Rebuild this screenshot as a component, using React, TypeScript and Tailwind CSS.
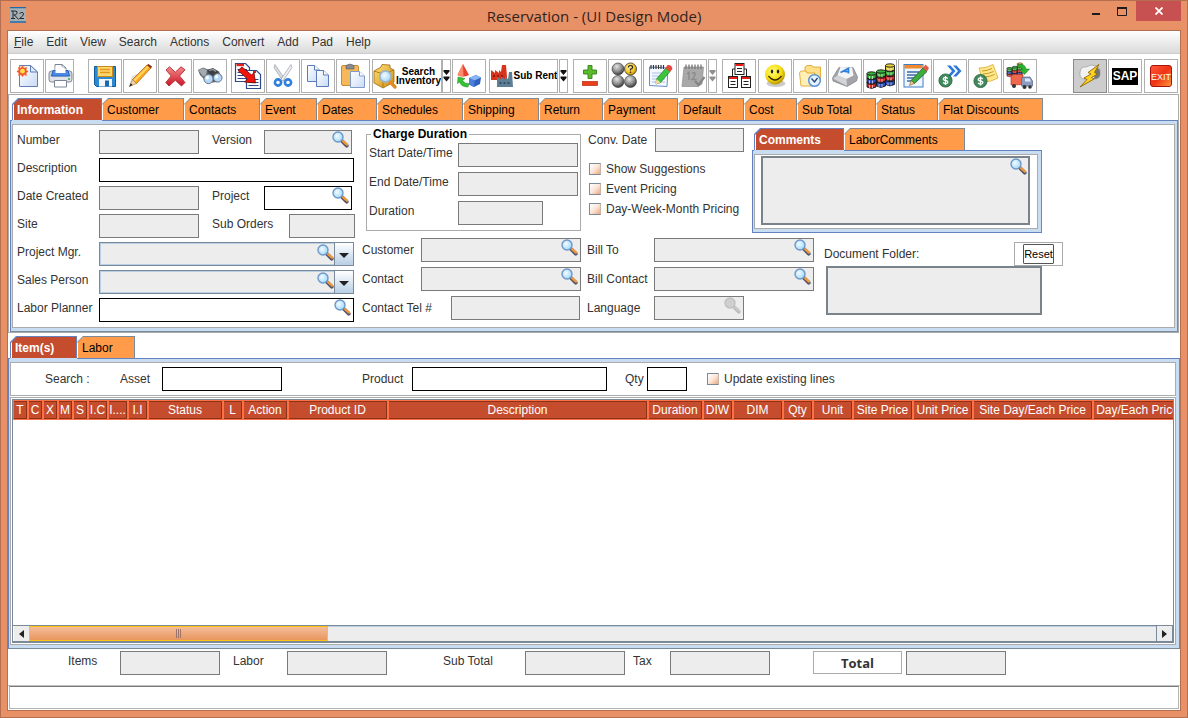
import React, { useId } from "react";
import type { ReactNode } from "react";

/* ---------- icons ---------- */

function Art({ children, w = "w-6" }: { children: ReactNode; w?: string }) {
  return (
    <svg viewBox="0 0 24 24" className={`h-6 shrink-0 overflow-visible ${w}`} aria-hidden="true">
      {children}
    </svg>
  );
}

function Gradients() {
  return (
    <svg className="absolute h-0 w-0" aria-hidden="true">
      <defs>
        <linearGradient id="gPaper" x1="0" y1="0" x2="1" y2="1">
          <stop offset="0" stopColor="#ffffff" />
          <stop offset="1" stopColor="#c9dbf5" />
        </linearGradient>
        <linearGradient id="gRed" x1="0" y1="0" x2="0" y2="1">
          <stop offset="0" stopColor="#f58a8a" />
          <stop offset="1" stopColor="#c81626" />
        </linearGradient>
        <linearGradient id="gGold" x1="0" y1="0" x2="1" y2="1">
          <stop offset="0" stopColor="#ffe17a" />
          <stop offset="1" stopColor="#d08a10" />
        </linearGradient>
        <linearGradient id="gExit" x1="0" y1="0" x2="1" y2="1">
          <stop offset="0" stopColor="#ff5a3c" />
          <stop offset="0.5" stopColor="#ee3414" />
          <stop offset="1" stopColor="#ff9a3c" />
        </linearGradient>
        <radialGradient id="gBall" cx="0.4" cy="0.3" r="0.7">
          <stop offset="0" stopColor="#e4e4e4" />
          <stop offset="0.6" stopColor="#8a8a8a" />
          <stop offset="1" stopColor="#3a3a3a" />
        </radialGradient>
        <radialGradient id="gSmile" cx="0.4" cy="0.35" r="0.7">
          <stop offset="0" stopColor="#ffff7a" />
          <stop offset="0.6" stopColor="#f7dc10" />
          <stop offset="1" stopColor="#b08a00" />
        </radialGradient>
        <radialGradient id="gAmber" cx="0.4" cy="0.35" r="0.7">
          <stop offset="0" stopColor="#fff2a8" />
          <stop offset="0.6" stopColor="#f8c428" />
          <stop offset="1" stopColor="#c08a00" />
        </radialGradient>
        <radialGradient id="gLens" cx="0.4" cy="0.4" r="0.6">
          <stop offset="0" stopColor="#f2fbff" />
          <stop offset="1" stopColor="#a3dafa" />
        </radialGradient>
      </defs>
    </svg>
  );
}

const Magnifier = ({ dim = false }: { dim?: boolean }) => (
  <svg viewBox="0 0 17 17" className="h-[17px] w-[17px]" aria-hidden="true">
    <path d="M9.500 9.500L14.700 14.700" stroke={dim ? "#bdbdbd" : "#55566a"} strokeWidth="3.800" strokeLinecap="round" />
    <path d="M11 10.200L15 13.700" stroke={dim ? "#c8c8c8" : "#f09a3c"} strokeWidth="2.200" strokeLinecap="round" />
    <circle cx="6" cy="6" r="5" fill={dim ? "#cfcfcf" : "url(#gLens)"} stroke={dim ? "#c0c0c0" : "#6f97c8"} strokeWidth="1.400" />
  </svg>
);

const NewDoc = () => (
  <Art>
    <path d="M4.500 1.500H15.500L22.500 8V22.500H4.500Z" fill="url(#gPaper)" stroke="#5f7fb5" />
    <path d="M15.500 1.500V8H22.500Z" fill="#dfeafc" stroke="#5f7fb5" />
    <circle cx="7.500" cy="7" r="5.200" fill="#ffb27a" opacity="0.600" />
    <path d="M7.500 1.500L9 4.200L12 3L11 6L13.500 7.500L11 9L12 12L9 10.500L7.500 13L6 10.500L3 12L4 9L1.500 7.500L4 6L3 3L6 4.200Z" fill="#f4552c" />
    <circle cx="7.500" cy="7.200" r="2.400" fill="#ffe34d" />
  </Art>
);

const Printer = () => (
  <Art>
    <path d="M7 11V0.500H14L18 4V11Z" fill="#fff" stroke="#7a8496" />
    <path d="M14 0.500V4H18" fill="none" stroke="#7a8496" />
    <rect x="1" y="7" width="23" height="11" rx="2.500" fill="#c9ced6" stroke="#858b97" />
    <path d="M5 6.500H20L21.500 12H3.500Z" fill="#4a8be8" stroke="#2a5fb8" />
    <path d="M7.500 2.500H13.500L17.500 5V9H7.500Z" fill="#fff" />
    <rect x="2" y="13" width="21" height="4" fill="#dfe2e8" />
    <circle cx="21" cy="15" r="1.100" fill="#2fae3c" />
    <path d="M6.500 16.500H18.500V23H6.500Z" fill="#fff" stroke="#7a8496" />
  </Art>
);

const Save = () => (
  <Art>
    <path d="M1.500 2.500H22.500V22.500H3.500L1.500 20.500Z" fill="#2e8ad0" stroke="#14599a" />
    <rect x="4.500" y="2.500" width="15" height="10" fill="#ffd66b" stroke="#c98a18" />
    <path d="M7 5.500H17M7 8.500H17" stroke="#e09a20" strokeWidth="1.400" />
    <rect x="6" y="15" width="13" height="7.500" fill="#f4f8fc" />
    <rect x="12" y="16.500" width="4" height="6" fill="#1a68b0" />
  </Art>
);

const Pencil = () => (
  <Art>
    <path d="M1 22L4 12L14 8Z" fill="#d4d4d4" opacity="0.700" />
    <path d="M4.500 15.500L19 1L23 4L8.500 19.500Z" fill="#ffa81e" stroke="#a0640c" strokeWidth="0.700" />
    <path d="M5.500 16L19.700 2L21 3L7 17.500Z" fill="#ffd86a" />
    <path d="M19 1L20.500 0L24 2.500L23 4.500Z" fill="#8a2a1c" />
    <path d="M4.500 15.500L8.500 19.500L1.500 22.500Z" fill="#f2d3a4" stroke="#8a6420" strokeWidth="0.500" />
    <path d="M2.800 19.200L4.600 21L1.200 22.800Z" fill="#222" />
  </Art>
);

const Delete = () => (
  <Art>
    <path
      d="M3 6L6.500 2.800L12.300 8.200L18 2.800L22 5.800L16.500 12L22 18.500L18.500 22L12.300 16.200L6 22L2.800 18.500L8.200 12Z"
      fill="url(#gRed)"
      stroke="#b02a34"
      strokeWidth="0.900"
      strokeLinejoin="round"
    />
  </Art>
);

const Binoculars = () => (
  <Art>
    <path d="M0 6L5 3.500L10 5.500L15 4L21 7.500L24 14L19 18L10 19L2 11Z" fill="#5c6066" />
    <path d="M0.500 6.500L5 4L9 6L8 12L5 12.500Z" fill="#a6abb2" />
    <path d="M9 6L15 4.500L20.500 8L17 12L12 11Z" fill="#3c3f44" />
    <path d="M11 6.500L15 5.500L18 7.500" stroke="#9a9fa6" strokeWidth="1.200" fill="none" />
    <circle cx="10.500" cy="15" r="4.600" fill="#b4d9fb" stroke="#6a727c" />
    <circle cx="19.700" cy="13.800" r="4.300" fill="#b4d9fb" stroke="#6a727c" />
    <circle cx="9.300" cy="13.800" r="1.700" fill="#fff" />
    <circle cx="18.600" cy="12.700" r="1.600" fill="#fff" />
  </Art>
);

const Replace = () => (
  <Art>
    <path d="M-0.500 -0.500H9.500L13.500 3.500V17.500H-0.500Z" fill="#fff" stroke="#2a4a8a" strokeWidth="1.200" />
    <path d="M0.500 1H8" stroke="#e8201a" strokeWidth="2.400" />
    <path d="M1.500 5.500H11M1.500 8.500H11M1.500 11.500H11M1.500 14.500H11" stroke="#2a4a8a" />
    <path d="M10.500 6.500H20.500L24.500 10.500V24.500H10.500Z" fill="#fff" stroke="#2a4a8a" strokeWidth="1.200" />
    <path d="M17 8H20" stroke="#e8201a" strokeWidth="2" />
    <path d="M12.500 15.500H22.500M12.500 18.500H22.500M12.500 21.500H22.500" stroke="#2a4a8a" />
    <path d="M2 6.500L6 3L15.500 11L18 8.500L19.500 19L8.500 18L11.500 15Z" fill="#f0140c" stroke="#6a0a06" strokeWidth="0.800" />
  </Art>
);

const Scissors = () => (
  <Art>
    <path d="M4 0.500L14.500 16L12 17L3 3.500Z" fill="#d8dce0" stroke="#9aa0a8" strokeWidth="0.700" />
    <path d="M20 0.500L9.500 16L12 17L21 3.500Z" fill="#eef0f2" stroke="#9aa0a8" strokeWidth="0.700" />
    <circle cx="7" cy="18.500" r="3.100" fill="none" stroke="#2f7fdc" strokeWidth="2.600" />
    <circle cx="17" cy="18.500" r="3.100" fill="none" stroke="#2f7fdc" strokeWidth="2.600" />
  </Art>
);

const Copy = () => (
  <Art>
    <path d="M1.500 1.500H8.500L13.500 6V17.500H1.500Z" fill="url(#gPaper)" stroke="#5b7cb8" />
    <path d="M8.500 1.500V6H13.500" fill="#fff" stroke="#5b7cb8" />
    <path d="M10.500 6.500H17.500L22.500 11V22.500H10.500Z" fill="url(#gPaper)" stroke="#5b7cb8" />
    <path d="M17.500 6.500V11H22.500" fill="#fff" stroke="#5b7cb8" />
  </Art>
);

const Paste = () => (
  <Art>
    <rect x="0.500" y="1.500" width="17" height="20" rx="1.500" fill="#f5b95c" stroke="#c98a30" />
    <path d="M5 1.500Q9 -1.500 13 1.500V5H5Z" fill="#8a8a92" stroke="#5a5a60" strokeWidth="0.600" />
    <path d="M9.500 7.500H18.500L23.500 12V23.500H9.500Z" fill="url(#gPaper)" stroke="#7f9cc8" />
    <path d="M18.500 7.500V12H23.500" fill="#fff" stroke="#7f9cc8" />
  </Art>
);

const InventoryBox = () => (
  <Art>
    <path d="M1 7L8 3L9 0.500L17 1L17 4L21 6V18L10 24L1 19Z" fill="url(#gGold)" stroke="#9a6a0c" strokeWidth="0.800" />
    <path d="M1 7L10 10L21 6M10 10V23" stroke="#b47c14" fill="none" />
    <path d="M16.500 17L22 23" stroke="#e08a20" strokeWidth="3.400" strokeLinecap="round" />
    <circle cx="12.500" cy="12.500" r="5.600" fill="url(#gLens)" stroke="#9db4c8" strokeWidth="1.700" />
  </Art>
);

const Shapes = () => (
  <Art>
    <path d="M6 0L12 11Q6 14 0.500 11Z" fill="#e8402c" />
    <path d="M6 0L6.500 12.500Q3 12.500 0.500 11Z" fill="#ff8a6a" />
    <path d="M1 13L8 14.500L5.500 16.500Q8 20 12 19.500L11 23Q4 23 2.500 18L0.500 19.500Z" fill="#38c038" stroke="#1c8a20" strokeWidth="0.500" />
    <path d="M12 14L19 11L24 13.500L23 20L17 23L12 20.500Z" fill="#2f5fc0" />
    <path d="M12 14L19 11L24 13.500L17.500 16.500Z" fill="#8ab4f4" />
    <path d="M12 14L17.500 16.500L17 23L12 20.500Z" fill="#4a7fdc" />
  </Art>
);

const Factory = () => (
  <Art>
    <path d="M1 16V6L5 9V6L9 9V6L11 8L12 1H16L17 13V16H1Z" fill="#d8341c" />
    <path d="M3 12H5M7 12H9M11 12H13" stroke="#7a140a" strokeWidth="1.600" />
    <path d="M7 23V12.500L11 15.500V12.500L15 15.500V12.500L18 15L19 8H22L23 23Z" fill="#5d7f95" />
    <path d="M9.500 19H11.500M13.500 19H15.500M17.500 19H19.500" stroke="#27404f" strokeWidth="1.600" />
  </Art>
);

const PlusMinus = () => (
  <Art>
    <path d="M10 1.500H14V6H18.500V10H14V14.500H10V10H5.500V6H10Z" fill="#5cb82c" stroke="#2f8414" strokeWidth="0.900" />
    <rect x="4.500" y="17.500" width="15" height="4" fill="#e8401c" stroke="#b8280c" strokeWidth="0.700" />
  </Art>
);

const Balls = () => (
  <Art>
    <circle cx="5" cy="5" r="6" fill="url(#gBall)" stroke="#333" strokeWidth="0.600" />
    <circle cx="17.500" cy="5" r="6" fill="url(#gAmber)" stroke="#333" strokeWidth="0.800" />
    <circle cx="5" cy="17.500" r="6" fill="url(#gBall)" stroke="#333" strokeWidth="0.600" />
    <circle cx="17.500" cy="17.500" r="6" fill="url(#gBall)" stroke="#333" strokeWidth="0.600" />
    <path d="M15.500 3.500Q15.500 1.500 17.500 1.500Q19.700 1.500 19.500 3.500Q19.400 4.800 17.500 5.200V6.500" fill="none" stroke="#222" strokeWidth="1.200" />
    <circle cx="17.500" cy="8.300" r="0.800" fill="#222" />
  </Art>
);

const NotePencil = () => (
  <Art>
    <path d="M1.500 3L20 4L19 22.500L1.500 21.500Z" fill="#f4f8ff" stroke="#6a8cc8" />
    <path d="M4 9H17M4 12H17M4 15H17M4 18H17" stroke="#a8c0e8" />
    <path d="M3 1V5M5.500 1V5M8 1V5M10.500 1V5M13 1V5M15.500 1V5" stroke="#333" strokeWidth="1.200" />
    <path d="M8.500 15L18 4L22 7.500L12.500 18.500L8 20Z" fill="#3cc43c" stroke="#1c7a20" strokeWidth="0.700" />
    <path d="M17.500 4L19.500 1Q23.800 0.500 24.500 4.800L22 8Z" fill="#e8483c" />
    <path d="M8.500 15L12.500 18.500L7.500 20.500Z" fill="#f4d8a8" />
  </Art>
);

const CalendarOff = () => (
  <Art>
    <path d="M3 3H22.500L21 20L17 22.500H1Z" fill="#a9a9a9" stroke="#8f8f8f" strokeWidth="0.700" />
    <path d="M5 0.500V5M8 0.500V5M11 0.500V5M14 0.500V5M17 0.500V5M20 0.500V5" stroke="#787878" strokeWidth="1.300" />
    <path d="M6 10L8 8.500V16M11 9.500Q14.500 7.500 14 10.500Q13.500 13 11 15.500H15.500" stroke="#8c8c8c" strokeWidth="1.500" fill="none" />
    <path d="M14 17L17.500 21L23.500 13" stroke="#858585" strokeWidth="2.200" fill="none" />
  </Art>
);

const OrgDocs = () => (
  <Art>
    <path d="M8 5H5.500V12.500M17 5H19.500V12.500" stroke="#222" fill="none" />
    {[
      [8, -0.500],
      [1.500, 12.500],
      [14.500, 12.500],
    ].map(([x, y]) => (
      <g key={`${x}-${y}`}>
        <rect x={x} y={y} width="9" height="11" fill="#fff" stroke="#222" />
        <path d={`M${x + 0.500} ${y + 1.500}h8`} stroke="#e81c14" strokeWidth="2" />
        <path d={`M${x + 2} ${y + 5}h5M${x + 2} ${y + 8}h5`} stroke="#222" />
      </g>
    ))}
  </Art>
);

const Smile = () => (
  <Art>
    <ellipse cx="13" cy="19.500" rx="9.500" ry="3.500" fill="#a8a8a8" opacity="0.600" />
    <circle cx="12" cy="10.500" r="10" fill="url(#gSmile)" />
    <ellipse cx="9" cy="7.500" rx="1.200" ry="2" fill="#222" />
    <ellipse cx="15" cy="7.500" rx="1.200" ry="2" fill="#222" />
    <path d="M5.500 12Q12 20 18.500 12" stroke="#3a2c00" strokeWidth="1.400" fill="none" />
  </Art>
);

const FolderClock = () => (
  <Art>
    <path d="M7 3L9 1.500H14L15 3H22.500V18H7Z" fill="#ffe08a" stroke="#d8a020" strokeWidth="0.800" />
    <path d="M1.500 9L3 7H8L9 9H17V22H3Z" fill="#fff0b8" stroke="#d8a020" strokeWidth="0.800" />
    <circle cx="16.500" cy="16.500" r="5.800" fill="#e6f3ff" stroke="#5c94d8" strokeWidth="1.500" />
    <path d="M13.500 14.500L16.500 18L19.500 14" stroke="#24427a" strokeWidth="1.300" fill="none" />
  </Art>
);

const Key = () => (
  <Art>
    <path d="M-0.500 14L6 3.500L20 3.500L24.500 13L23.500 17L14 22.500L0 17Z" fill="#a2a4a8" stroke="#7c7e82" strokeWidth="0.700" />
    <path d="M4.500 11.500L7.500 3L19 3.500L20.500 11.500L13.500 15Z" fill="#f4f5f7" />
    <path d="M0 14.500L4.500 11.500L13.500 15L14 22Z" fill="#d2d4d8" />
    <path d="M7.500 8.500L15.500 4.500L15.500 9.500M10.500 7.200L15.500 7.800" stroke="#2f7fe0" strokeWidth="1.700" fill="none" />
  </Art>
);

function Drum({ x, y, c }: { x: number; y: number; c: string }) {
  return (
    <g stroke="#141414" strokeWidth="0.900">
      <path d={`M${x} ${y}v4.500q4.500 2.800 9 0v-4.500z`} fill={c} />
      <ellipse cx={x + 4.500} cy={y} rx="4.500" ry="1.700" fill={c} />
      <path d={`M${x + 2.500} ${y + 2.500}v3M${x + 5.500} ${y + 2.500}v3`} stroke="#fff" strokeWidth="0.900" opacity="0.700" />
    </g>
  );
}

function DrumStack() {
  return (
    <>
      <Drum x={17.500} y={16} c="#2c4ec0" />
      <Drum x={17.500} y={11} c="#d82c2c" />
      <Drum x={17.500} y={6} c="#3cb43c" />
      <Drum x={17.500} y={1.500} c="#e8d440" />
      <Drum x={8.500} y={17.500} c="#2c4ec0" />
      <Drum x={8.500} y={12.500} c="#d82c2c" />
      <Drum x={8.500} y={7.500} c="#3cb43c" />
      <Drum x={-1} y={18.500} c="#d82c2c" />
      <Drum x={-1} y={14} c="#2c4ec0" />
      <Drum x={-1} y={9.500} c="#3cb43c" />
    </>
  );
}

const Drums = () => (
  <Art>
    <DrumStack />
  </Art>
);

const EditDoc = () => (
  <Art>
    <rect x="1" y="0.500" width="19" height="22.500" fill="#eef5ff" stroke="#3f7cc4" />
    <rect x="1.500" y="1" width="18" height="3.500" fill="#f08a30" />
    <path d="M4 8H16M4 11H13M4 14H11M4 17H9" stroke="#3f6ca8" strokeWidth="1.300" />
    <path d="M8 16.500L20 4L24 7.500L11.500 19.500Z" fill="#3cac3c" stroke="#1c5a20" strokeWidth="0.800" />
    <path d="M20 4L22.500 0.500L26 4L24 7.500Z" fill="#e85848" />
    <path d="M8 16.500L11.500 19.500L6.500 21.500Z" fill="#f0c890" stroke="#6a4a14" strokeWidth="0.500" />
  </Art>
);

const Coin = ({ x, y }: { x: number; y: number }) => (
  <g>
    <circle cx={x} cy={y} r="6.600" fill="#3f8a5c" stroke="#28603e" strokeWidth="0.800" />
    <path
      d={`M${x + 2.300} ${y - 2}q-2.300 -2 -4.200 -0.500q-1.200 2 1.900 2.500q3.200 0.700 2 2.500q-2 1.500 -4.500 -0.500M${x} ${y - 4.500}v9`}
      stroke="#fff"
      strokeWidth="1.300"
      fill="none"
    />
  </g>
);

const CoinForward = () => (
  <Art>
    <path d="M9 1.500H12.500L17.500 7L12.500 12.500H9L14 7Z" fill="#2f78d8" />
    <path d="M15 1.500H18.500L23.500 7L18.500 12.500H15L20 7Z" fill="#2f78d8" />
    <Coin x={7.500} y={16.500} />
  </Art>
);

const CoinNote = () => (
  <Art>
    <path d="M6 4Q13 4.500 20 0.500L25 14Q18 18.500 10 17.500Z" fill="#ffe88a" stroke="#d8ac30" strokeWidth="0.800" />
    <path d="M9 7Q14 7 19 4.500M10 10Q15 10 20.500 7.500M11 13Q16 13 21.500 10.500" stroke="#c8982c" fill="none" />
    <Coin x={7.500} y={17} />
  </Art>
);

const Truck = () => (
  <Art>
    <g transform="translate(-0.500 -1) scale(0.560)">
      <DrumStack />
    </g>
    <path d="M10 1Q17 -1 18 5H21.500L16.500 10.500L11 5.500H14.500Q14 2.500 10 3.500Z" fill="#2cb42c" stroke="#187a1c" strokeWidth="0.500" />
    <path d="M3 12.500L5 10.500H15V20.500L3 21Z" fill="#f0684c" stroke="#b8341c" strokeWidth="0.700" />
    <path d="M13.500 14L16 13H22L24.500 17V22H13.500Z" fill="#8c9cc0" stroke="#52608a" strokeWidth="0.700" />
    <path d="M17 14.500H21.500L23 17.500H17Z" fill="#dce8f8" />
    <circle cx="6" cy="22" r="2" fill="#333" />
    <circle cx="16.500" cy="23" r="2" fill="#333" />
    <circle cx="22" cy="23" r="1.800" fill="#333" />
  </Art>
);

const Lightning = () => (
  <Art>
    <path d="M2 8Q3 2 8 3Q13 -0.500 18 2Q23 4 22 10Q22 15 16 15H6Q1 14 2 8Z" fill="#f2f2f2" stroke="#9a9a9a" strokeWidth="0.700" />
    <path d="M17 3Q23 4 22 10Q22 15 16 15Z" fill="#777" />
    <path d="M21 0.500L10 8.500L13 10L6 14L9 15.500L2 23L16 15L13.500 13.500L19.500 10L16.500 8.500Z" fill="#ffd21c" stroke="#8c6808" strokeWidth="0.900" />
  </Art>
);

/* ---------- controls ---------- */

function Tool({ label, w = "w-[34px]", m = "", bg = "bg-white", edge = "border-[#b0b0b0]", children }: {
  label: string; w?: string; m?: string; bg?: string; edge?: string; children: ReactNode;
}) {
  return (
    <button type="button" aria-label={label} className={`flex h-[34px] shrink-0 items-center justify-center overflow-hidden border ${edge} ${bg} ${w} ${m}`}>
      {children}
    </button>
  );
}

function DropTool({ label, w = "w-[9px]", m = "", fill = "#111" }: { label: string; w?: string; m?: string; fill?: string }) {
  return (
    <Tool label={label} w={w} m={m}>
      <svg viewBox="0 0 7 12" className="h-3 w-[7px] shrink-0" aria-hidden="true">
        <path d="M0.500 0H6.500V1.500L3.500 5L0.500 1.500ZM0.500 6.500H6.500V8L3.500 11.500L0.500 8Z" fill={fill} />
      </svg>
    </Tool>
  );
}

const fieldTone = {
  locked: "border-[#7a7a7a] bg-[#ededed]",
  open: "border-black bg-white",
};

function Field({ label, labelW = "", w, tone = "locked", lens, m = "", align = "items-start" }: {
  label: string; labelW?: string; w: string; tone?: "locked" | "open"; lens?: "on" | "off"; m?: string; align?: string;
}) {
  const id = useId();
  return (
    <div className={`flex shrink-0 ${align} ${m}`}>
      <label htmlFor={id} className={`shrink-0 leading-5 whitespace-nowrap ${labelW}`}>{label}</label>
      <div className={`relative shrink-0 ${w}`}>
        <input id={id} readOnly={tone === "locked"} className={`block h-6 w-full border px-1 outline-none ${fieldTone[tone]}`} />
        {lens && (
          <button type="button" disabled={lens === "off"} aria-label={`Find ${label}`} className="absolute top-px right-[3px]">
            <Magnifier dim={lens === "off"} />
          </button>
        )}
      </div>
    </div>
  );
}

function Combo({ label }: { label: string }) {
  const id = useId();
  return (
    <div className="flex items-start">
      <label htmlFor={id} className="w-[82px] shrink-0 leading-5 whitespace-nowrap">{label}</label>
      <div className="relative w-[255px]">
        <select id={id} className="block h-6 w-full appearance-none border border-[#7a8a99] bg-[#ededed] shadow-[inset_1px_1px_0_#b8cfe5,inset_0_-1px_0_#b8cfe5] outline-none">
          <option />
        </select>
        <div className="pointer-events-none absolute top-0 right-0 flex h-6 w-5 items-center justify-center border border-[#7a8a99] bg-linear-to-b from-white to-[#b8cfe5] pt-[2px]">
          <svg viewBox="0 0 10 5" className="h-[5px] w-[10px]" aria-hidden="true"><path d="M0 0H10L5 5Z" fill="#222" /></svg>
        </div>
        <button type="button" aria-label={`Find ${label}`} className="absolute top-[2px] right-5"><Magnifier /></button>
      </div>
    </div>
  );
}

function Check({ label, m = "" }: { label: string; m?: string }) {
  return (
    <label className={`flex h-5 shrink-0 items-center gap-[5px] whitespace-nowrap ${m}`}>
      <input
        type="checkbox"
        className="h-3 w-3 appearance-none border border-t-[#7a8a99] border-r-[#c9b4a8] border-b-[#7a8a99] border-l-[#7a8a99] bg-linear-to-br from-white via-[#fae6da] to-[#eda878] checked:bg-[#c54d2d]"
      />
      {label}
    </label>
  );
}

function Tab({ label, w, active = false }: { label: string; w: string; active?: boolean }) {
  return (
    <button
      type="button"
      role="tab"
      aria-selected={active}
      className={`relative flex shrink-0 pt-px pr-px [clip-path:polygon(0_6px,6px_0,100%_0,100%_100%,0_100%)] ${w} ${
        active ? "z-10 -mb-px h-[23px] border-b border-[#c8ddf2] bg-[#6382bf] pl-px" : "h-[22px] bg-[#7a8a99]"
      }`}
    >
      <span
        className={`flex h-full w-full items-center border-l border-white text-left whitespace-nowrap [clip-path:polygon(0_6px,6px_0,100%_0,100%_100%,0_100%)] ${
          active ? "bg-[#c54d2d] pl-[3px] font-bold text-white" : "bg-[#ff9b49] pl-1 text-black"
        }`}
      >
        {label}
      </span>
    </button>
  );
}

/* ---------- data ---------- */

const menus = ["Edit", "View", "Search", "Actions", "Convert", "Add", "Pad", "Help"];

const mainTabs: [string, string][] = [
  ["Information", "w-[90px]"],
  ["Customer", "w-[82px]"],
  ["Contacts", "w-[76px]"],
  ["Event", "w-[57px]"],
  ["Dates", "w-[60px]"],
  ["Schedules", "w-[86px]"],
  ["Shipping", "w-[76px]"],
  ["Return", "w-[64px]"],
  ["Payment", "w-[75px]"],
  ["Default", "w-[66px]"],
  ["Cost", "w-[53px]"],
  ["Sub Total", "w-[79px]"],
  ["Status", "w-[62px]"],
  ["Flat Discounts", "w-[105px]"],
];

const columns: [string, string][] = [
  ["T", "w-[15px]"],
  ["C", "w-[15px]"],
  ["X", "w-[15px]"],
  ["M", "w-[15px]"],
  ["S", "w-[15px]"],
  ["I.C", "w-[20px]"],
  ["I....", "w-[20px]"],
  ["I.I", "w-[20px]"],
  ["Status", "w-[75px]"],
  ["L", "w-[20px]"],
  ["Action", "w-[45px]"],
  ["Product ID", "w-[100px]"],
  ["Description", "w-[260px]"],
  ["Duration", "w-[55px]"],
  ["DIW", "w-[30px]"],
  ["DIM", "w-[50px]"],
  ["Qty", "w-[30px]"],
  ["Unit", "w-[40px]"],
  ["Site Price", "w-[60px]"],
  ["Unit Price", "w-[60px]"],
  ["Site Day/Each Price", "w-[120px]"],
  ["Day/Each Price", "w-[90px]"],
];

/* ---------- sections ---------- */

function TitleBar() {
  return (
    <header className="relative flex h-[29px] shrink-0 items-start justify-between">
      <svg viewBox="0 0 16 16" className="mt-[6px] ml-[3px] h-4 w-4" aria-hidden="true">
        <rect width="16" height="16" fill="#a9b0b4" />
        <path d="M0 0.500H16M0 15H16" stroke="#2468a8" strokeWidth="1.600" />
        <path d="M1 4H5Q8 4 7 6.500Q6 8 3.500 8M3 4V11M1 11.500H5M4.500 8L8.500 12.500M9.500 6.500Q13 4 13.500 7Q13.500 9 9.500 11.500H14" stroke="#1c2a36" fill="none" />
      </svg>
      <h1 className="absolute inset-x-0 top-[5px] text-center font-['Open_Sans','Noto_Sans',sans-serif] text-[15px] leading-5 text-[#30231d]">Reservation - (UI Design Mode)</h1>
      <div className="relative flex">
        <button type="button" aria-label="Minimize" className="flex h-5 w-6 items-center justify-center">
          <svg viewBox="0 0 10 12" className="h-3 w-[10px]" aria-hidden="true"><path d="M1 9H9" stroke="#1c1c1c" strokeWidth="2" /></svg>
        </button>
        <button type="button" aria-label="Maximize" className="flex h-5 w-7 items-center justify-center">
          <svg viewBox="0 0 10 9" className="h-[9px] w-[10px]" aria-hidden="true"><path d="M0.500 1H9.500V8.500H0.500Z" fill="none" stroke="#1c1c1c" /><path d="M0 1H10" stroke="#1c1c1c" strokeWidth="2" /></svg>
        </button>
        <button type="button" aria-label="Close" className="flex h-5 w-[45px] items-center justify-center bg-[#c75050]">
          <svg viewBox="0 0 8 8" className="h-2 w-2" aria-hidden="true"><path d="M0.500 0.500L7.500 7.500M7.500 0.500L0.500 7.500" stroke="#fff" strokeWidth="1.800" /></svg>
        </button>
      </div>
    </header>
  );
}

function Toolbar() {
  return (
    <div role="toolbar" className="flex shrink-0 gap-px pt-[5px] pr-[2px] pb-px pl-[2px]">
      <Tool label="New"><NewDoc /></Tool>
      <Tool label="Print" w="w-[29px]"><Printer /></Tool>
      <Tool label="Save" m="ml-[13px]"><Save /></Tool>
      <Tool label="Edit"><Pencil /></Tool>
      <Tool label="Delete"><Delete /></Tool>
      <Tool label="Find"><Binoculars /></Tool>
      <Tool label="Replace" m="ml-[3px]"><Replace /></Tool>
      <Tool label="Cut"><Scissors /></Tool>
      <Tool label="Copy"><Copy /></Tool>
      <Tool label="Paste"><Paste /></Tool>
      <Tool label="Search Inventory" w="w-[70px]" m="ml-px">
        <InventoryBox />
        <span className="-ml-px text-center text-[10px] leading-[9px] font-bold text-black">Search<br />Inventory</span>
      </Tool>
      <DropTool label="Search Inventory options" m="-ml-px" />
      <Tool label="Shapes"><Shapes /></Tool>
      <Tool label="Sub Rent" w="w-[69px]" m="ml-[2px]">
        <Factory />
        <span className="text-[10px] leading-3 font-bold whitespace-nowrap text-black">Sub Rent</span>
      </Tool>
      <DropTool label="Sub Rent options" />
      <Tool label="Add or remove" m="ml-1"><PlusMinus /></Tool>
      <Tool label="Availability"><Balls /></Tool>
      <Tool label="Notes"><NotePencil /></Tool>
      <Tool label="Calendar" w="w-[29px]"><CalendarOff /></Tool>
      <DropTool label="Calendar options" fill="#909090" />
      <Tool label="Documents" m="ml-1"><OrgDocs /></Tool>
      <Tool label="Status" m="ml-px"><Smile /></Tool>
      <Tool label="History"><FolderClock /></Tool>
      <Tool label="Keyboard"><Key /></Tool>
      <Tool label="Stock"><Drums /></Tool>
      <Tool label="Edit document"><EditDoc /></Tool>
      <Tool label="Forward payment"><CoinForward /></Tool>
      <Tool label="Invoice"><CoinNote /></Tool>
      <Tool label="Delivery"><Truck /></Tool>
      <Tool label="Quick action" m="ml-auto" bg="bg-[#cdcdcd]" edge="border-[#8a8a8a]"><Lightning /></Tool>
      <Tool label="SAP"><span className="bg-black px-px text-[12px] leading-[17px] font-bold text-white">SAP</span></Tool>
      <Tool label="Exit" m="ml-px">
        <svg viewBox="0 0 24 24" className="h-6 w-6 shrink-0" aria-hidden="true">
          <rect x="1.500" y="1.500" width="21" height="21" rx="2.500" fill="url(#gExit)" stroke="#a8140c" />
          <text x="12" y="15.500" textAnchor="middle" fill="#fff" fontSize="9" fontFamily="Liberation Sans, sans-serif">EXIT</text>
        </svg>
      </Tool>
    </div>
  );
}

function InfoPanel() {
  return (
    <div className="flex border border-[#ababab] bg-white pb-[5px] pl-1">
      <div className="flex w-[338px] shrink-0 flex-col gap-1 pt-[5px]">
        <div className="flex">
          <Field label="Number" labelW="w-[82px]" w="w-[100px]" />
          <Field label="Version" labelW="w-[52px]" w="w-[88px]" lens="on" m="ml-[13px]" />
        </div>
        <Field label="Description" labelW="w-[82px]" w="w-[255px]" tone="open" />
        <div className="flex">
          <Field label="Date Created" labelW="w-[82px]" w="w-[100px]" />
          <Field label="Project" labelW="w-[52px]" w="w-[88px]" tone="open" lens="on" m="ml-[13px]" />
        </div>
        <div className="flex">
          <Field label="Site" labelW="w-[82px]" w="w-[100px]" />
          <Field label="Sub Orders" labelW="w-[77px]" w="w-[66px]" m="ml-[13px]" />
        </div>
        <Combo label="Project Mgr." />
        <Combo label="Sales Person" />
        <Field label="Labor Planner" labelW="w-[82px]" w="w-[255px]" tone="open" lens="on" />
      </div>

      <div className="ml-[7px] w-[219px] shrink-0 pt-px">
        <fieldset className="ml-1 border border-[#ababab] pt-px pb-[5px] pl-[2px]">
          <legend className="ml-[2px] px-[2px] leading-4 font-bold text-black">Charge Duration</legend>
          <div className="flex flex-col gap-[5px]">
            <Field label="Start Date/Time" labelW="w-[89px]" w="w-[120px]" />
            <Field label="End Date/Time" labelW="w-[89px]" w="w-[120px]" />
            <Field label="Duration" labelW="w-[89px]" w="w-[85px]" />
          </div>
        </fieldset>
        <div className="mt-[7px] flex flex-col gap-[5px]">
          <Field label="Customer" labelW="w-[59px]" w="w-[160px]" lens="on" align="items-center" />
          <Field label="Contact" labelW="w-[59px]" w="w-[160px]" lens="on" align="items-center" />
          <Field label="Contact Tel #" labelW="w-[89px]" w="w-[129px]" align="items-center" />
        </div>
      </div>

      <div className="ml-[5px] min-w-0 flex-1 pt-[3px]">
        <div className="flex">
          <div className="w-[166px] shrink-0 pl-[2px]">
            <Field label="Conv. Date" labelW="w-[67px]" w="w-[89px]" align="items-center" />
            <div className="mt-[7px] ml-px">
              <Check label="Show Suggestions" />
              <Check label="Event Pricing" />
              <Check label="Day-Week-Month Pricing" />
            </div>
          </div>
          <div className="w-[290px]">
            <div role="tablist" className="flex pl-[2px]">
              <Tab label="Comments" w="w-[90px]" active />
              <Tab label="LaborComments" w="w-[121px]" />
            </div>
            <div className="border border-[#6382bf] border-r-[#7a8a99] bg-[#c8ddf2] pt-[3px] pr-[3px] pb-[3px] pl-px">
              <div className="border border-[#ababab] bg-white pt-px pr-[7px] pb-[3px] pl-[6px]">
                <div className="relative">
                  <textarea aria-label="Comments" readOnly className="block h-[69px] w-full resize-none border-2 border-[#7a828a] bg-[#ededed] outline-none" />
                  <button type="button" aria-label="Find comment" className="absolute top-[2px] right-[3px]"><Magnifier /></button>
                </div>
              </div>
            </div>
          </div>
        </div>
        <div className="mt-[5px] flex">
          <div className="flex w-[228px] shrink-0 flex-col gap-[5px] pl-px">
            <Field label="Bill To" labelW="w-[67px]" w="w-[160px]" lens="on" align="items-center" />
            <Field label="Bill Contact" labelW="w-[67px]" w="w-[160px]" lens="on" align="items-center" />
            <Field label="Language" labelW="w-[67px]" w="w-[90px]" lens="off" align="items-center" />
          </div>
          <div className="ml-[10px] w-[239px] pt-1">
            <div className="flex items-center justify-between">
              <label htmlFor="doc-folder">Document Folder:</label>
              <div className="flex h-6 w-[49px] items-center justify-center border border-[#ababab]">
                <button type="button" className="h-5 rounded-[1px] border border-[#555] text-[11px] leading-[18px] whitespace-nowrap text-black">Reset</button>
              </div>
            </div>
            <textarea id="doc-folder" readOnly className="ml-[2px] block h-[49px] w-[216px] resize-none border-2 border-[#7a828a] bg-[#ededed] outline-none" />
          </div>
        </div>
      </div>
    </div>
  );
}

function ItemsPanel() {
  return (
    <section className="flex flex-1 flex-col pt-[3px]">
      <div role="tablist" className="flex pl-[2px]">
        <Tab label="Item(s)" w="w-[67px]" active />
        <Tab label="Labor" w="w-[58px]" />
      </div>
      <div className="flex flex-1 flex-col border border-t-[#6382bf] border-r-[#7a8a99] border-b-[#7a8a99] border-l-[#6382bf] bg-[#c8ddf2] pt-[3px] pr-[3px] pb-[3px] pl-px">
        <div className="flex flex-1 flex-col gap-px bg-white">
          <div className="flex border border-[#ababab] py-1 pl-[34px]">
            <span className="w-[75px] leading-6">Search :</span>
            <Field label="Asset" labelW="w-[42px]" w="w-[120px]" tone="open" align="items-center" />
            <Field label="Product" labelW="w-[50px]" w="w-[195px]" tone="open" m="ml-20" align="items-center" />
            <Field label="Qty" labelW="w-[22px]" w="w-[40px]" tone="open" m="ml-[18px]" align="items-center" />
            <Check label="Update existing lines" m="ml-5 mt-[2px]" />
          </div>
          <div className="flex flex-1 border border-[#ababab] p-px">
            <div className="flex min-w-0 flex-1 flex-col border border-[#7a8a99]">
              <div className="w-0 min-w-full flex-1 overflow-hidden">
                <table className="w-[1170px] table-fixed border-collapse">
                  <thead>
                    <tr>
                      {columns.map(([name, w]) => (
                        <th key={name} scope="col" className={`h-5 p-0 font-normal ${w}`}>
                          <div className="h-5 border border-[#ff7044] bg-[#8c3218] p-px pl-0">
                            <div className="flex h-4 justify-center overflow-hidden bg-[#c54d2d] leading-4 whitespace-nowrap text-white">{name}</div>
                          </div>
                        </th>
                      ))}
                    </tr>
                  </thead>
                  <tbody />
                </table>
              </div>
              <div className="flex h-[17px] shrink-0 border-y border-[#7a8a99] bg-[#ededed]">
                <button type="button" aria-label="Scroll left" className="flex w-4 items-center justify-center border-l border-white">
                  <svg viewBox="0 0 5 8" className="h-2 w-[5px]" aria-hidden="true"><path d="M5 0V8L0 4Z" fill="#222" /></svg>
                </button>
                <div className="flex flex-1 shadow-[inset_0_1px_0_#b8cfe5]">
                  <div className="flex w-[299px] items-center justify-center gap-px border border-[#ffc20e] bg-linear-to-b from-[#f3bd98] to-[#e8965e]">
                    <i className="h-[9px] w-px bg-[#a07468]" />
                    <i className="h-[9px] w-px bg-[#a07468]" />
                    <i className="h-[9px] w-px bg-[#a07468]" />
                  </div>
                </div>
                <button type="button" aria-label="Scroll right" className="flex w-[17px] items-center justify-center border-x border-[#7a8a99]">
                  <svg viewBox="0 0 5 8" className="h-2 w-[5px]" aria-hidden="true"><path d="M0 0V8L5 4Z" fill="#222" /></svg>
                </button>
              </div>
            </div>
          </div>
        </div>
      </div>
    </section>
  );
}

export default function App() {
  return (
    <div className="flex min-h-screen flex-col border border-[#b46e50] bg-[#e89066] px-[6px] pb-[6px] font-['Liberation_Sans',Arial,sans-serif] text-[12px] text-[#333]">
      <Gradients />
      <TitleBar />
      <main className="flex flex-1 flex-col border border-[#b46e50] bg-white">
        <nav className="flex h-[23px] shrink-0 items-center gap-[13px] border-b border-[#cccccc] bg-linear-to-b from-white to-[#dadada] pl-[6px]">
          <button type="button"><u>F</u>ile</button>
          {menus.map((m) => (
            <button type="button" key={m}>{m}</button>
          ))}
        </nav>
        <Toolbar />
        <section className="mr-px border border-[#ababab] pt-[3px] pl-px">
          <div role="tablist" className="flex pl-[2px]">
            {mainTabs.map(([name, w], i) => (
              <Tab key={name} label={name} w={w} active={i === 0} />
            ))}
          </div>
          <div className="border border-t-[#6382bf] border-r-[#7a8a99] border-b-[#7a8a99] border-l-[#6382bf] bg-[#c8ddf2] pt-[3px] pr-[2px] pb-[3px] pl-px">
            <InfoPanel />
          </div>
        </section>
        <ItemsPanel />
        <footer>
          <div className="flex pt-[2px] pb-[10px] pl-[60px]">
            <Field label="Items" labelW="w-[52px]" w="w-[100px]" />
            <Field label="Labor" labelW="w-[54px]" w="w-[100px]" m="ml-[13px]" />
            <Field label="Sub Total" labelW="w-[82px]" w="w-[100px]" m="ml-14" />
            <Field label="Tax" labelW="w-[37px]" w="w-[100px]" m="ml-2" />
            <label htmlFor="grand-total" className="ml-[43px] flex h-[23px] w-[89px] items-center justify-center border border-[#ababab] pt-[2px] font-['Open_Sans','Noto_Sans',sans-serif] text-[13px] font-bold">Total</label>
            <input id="grand-total" readOnly className="ml-1 h-6 w-[100px] border border-[#7a7a7a] bg-[#ededed]" />
          </div>
          <div role="status" className="h-[25px] border-t border-[#c0c0c0] px-px pb-px">
            <div className="h-full border border-[#b4b4b4] border-t-[#7a7a7a]" />
          </div>
        </footer>
      </main>
    </div>
  );
}
